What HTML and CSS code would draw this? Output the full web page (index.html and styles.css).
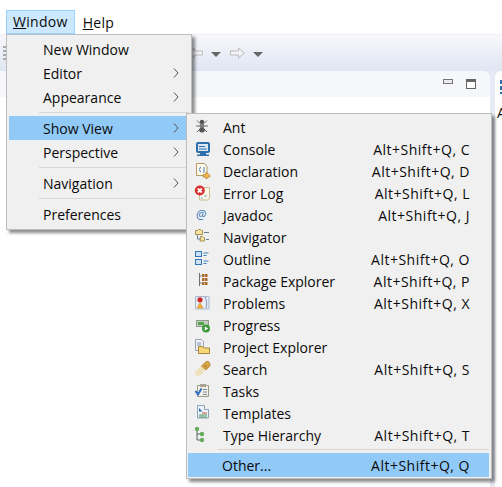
FILE: index.html
```html
<!DOCTYPE html>
<html lang="en">
<head>
    <meta charset="UTF-8">
    <title>Window menu - Show View</title>
    <link rel="stylesheet" href="styles.css">
</head>
<body>
    <div class="menubar">
        <span class="menubar-item active"><u>W</u>indow</span>
        <span class="menubar-item"><u>H</u>elp</span>
    </div>

    <div class="toolbar">
        <div class="grip"></div>
        <svg class="nav-arrow" viewBox="0 0 15 12"><path d="M.7 6l5.800-5v3h8v4h-8v3z"/></svg>
        <i class="drop"></i>
        <svg class="nav-arrow" viewBox="0 0 15 12"><path d="M14.300 6l-5.800-5v3h-8v4h8v3z"/></svg>
        <i class="drop"></i>
    </div>

    <div class="workspace">
        <div class="panel">
            <div class="panel-head">
                <i class="btn-min"></i>
                <i class="btn-max"></i>
            </div>
        </div>
        <div class="side-panel">
            <div class="side-icon"></div>
            <div class="side-text">A</div>
        </div>
    </div>

    <!-- Window menu -->
    <div class="menu window-menu">
        <div class="row">New Window</div>
        <div class="row">Editor<svg class="chev" viewBox="0 0 6 10"><path d="M1 .5l4 4.500-4 4.500"/></svg></div>
        <div class="row">Appearance<svg class="chev" viewBox="0 0 6 10"><path d="M1 .5l4 4.500-4 4.500"/></svg></div>
        <div class="sep"></div>
        <div class="row hot">Show View<svg class="chev" viewBox="0 0 6 10"><path d="M1 .5l4 4.500-4 4.500"/></svg></div>
        <div class="row">Perspective<svg class="chev" viewBox="0 0 6 10"><path d="M1 .5l4 4.500-4 4.500"/></svg></div>
        <div class="sep"></div>
        <div class="row">Navigation<svg class="chev" viewBox="0 0 6 10"><path d="M1 .5l4 4.500-4 4.500"/></svg></div>
        <div class="sep"></div>
        <div class="row">Preferences</div>
    </div>

    <!-- Show View submenu -->
    <div class="menu view-menu">
        <div class="view-row">
            <svg class="icon" viewBox="0 0 16 16">
                <path d="M2 1.500l3 3M12 1.500l-3 3M1 7h12M2 13l3-3M12 13l-3-3" stroke="#666" fill="none"/>
                <circle cx="7" cy="3" r="2.200" fill="#4f4f4f"/>
                <circle cx="7" cy="7" r="2.400" fill="#7b7b7b"/>
                <ellipse cx="7" cy="11" rx="2.800" ry="2.500" fill="#555"/>
            </svg>
            <span class="label">Ant</span>
        </div>
        <div class="view-row">
            <svg class="icon" viewBox="0 0 16 16">
                <rect x="2" y="2" width="12" height="9" rx="1" fill="#dfe9f5" stroke="#2f6fae" stroke-width="2"/>
                <path d="M4 5.500h6M4 8h8" stroke="#2f6fae"/>
                <path d="M5 12h6v1.500h3v1.500h-12v-1.500h3z" fill="#2f6fae"/>
            </svg>
            <span class="label">Console</span><span class="keys">Alt+Shift+Q, C</span>
        </div>
        <div class="view-row">
            <svg class="icon" viewBox="0 0 16 16">
                <path d="M1.500 .5h8l2.500 3v9h-10.500z" fill="#fbf8ec" stroke="#b59a62"/>
                <path d="M6 4c-1.500 0-.5 2-2 2.500 1.500.5.5 2.500 2 2.500M8 5h2M8 7h2M8 9h2" stroke="#4a7fb5" fill="none"/>
                <path d="M8 11.500h3v-2.500l4.500 4-4.500 3v-2h-3z" fill="#f2b74c" stroke="#b07f2a" stroke-width=".7"/>
            </svg>
            <span class="label">Declaration</span><span class="keys">Alt+Shift+Q, D</span>
        </div>
        <div class="view-row">
            <svg class="icon" viewBox="0 0 16 16">
                <path d="M5 2.500h9.500v11l-2 1.500h-8v-5z" fill="#fbf7e6" stroke="#c9bd93"/>
                <path d="M6 13h2M9 11h3" stroke="#7a9cc0"/>
                <circle cx="4.800" cy="5.500" r="5" fill="#d8302f"/>
                <path d="M2.800 3.500l4 4M6.800 3.500l-4 4" stroke="#fff" stroke-width="1.800"/>
            </svg>
            <span class="label">Error Log</span><span class="keys">Alt+Shift+Q, L</span>
        </div>
        <div class="view-row">
            <svg class="icon" viewBox="0 0 16 16">
                <text x="6" y="11.500" class="at">@</text>
            </svg>
            <span class="label">Javadoc</span><span class="keys">Alt+Shift+Q, J</span>
        </div>
        <div class="view-row">
            <svg class="icon" viewBox="0 0 16 16">
                <path d="M.5 1.500h2l1-1h2l1 1h1v4h-7z" fill="#f6e3a6" stroke="#a98f4e"/>
                <path d="M5.500 7.500h2l1 1h1v3.500h-4.500z" fill="#f6e3a6" stroke="#a98f4e"/>
                <path d="M2.500 6v4h3M9 3.500h5M11 10.500h3" stroke="#667f9a" fill="none"/>
            </svg>
            <span class="label">Navigator</span>
        </div>
        <div class="view-row">
            <svg class="icon" viewBox="0 0 16 16">
                <rect x=".5" y=".5" width="6" height="5" fill="#cfe2f5" stroke="#2f76b8"/>
                <rect x=".5" y="8.500" width="6" height="5" fill="#cfe2f5" stroke="#2f76b8"/>
                <path d="M8.500 2h5M8.500 4.500h3M8.500 10h5M8.500 12.500h3" stroke="#3f80bb"/>
            </svg>
            <span class="label">Outline</span><span class="keys">Alt+Shift+Q, O</span>
        </div>
        <div class="view-row">
            <svg class="icon" viewBox="0 0 16 16">
                <path d="M4.500 0v13M4.500 3h2M4.500 10h2" stroke="#6f6f6f" fill="none"/>
                <path d="M7 1h2.500v3h-2.500zM10 1h2.500v3h-2.500zM7 5h2.500v3h-2.500zM10 5h2.500v3h-2.500zM7 9h2.500v3h-2.500zM10 9h2.500v3h-2.500z" fill="#a96a2a"/>
            </svg>
            <span class="label">Package Explorer</span><span class="keys">Alt+Shift+Q, P</span>
        </div>
        <div class="view-row">
            <svg class="icon" viewBox="0 0 16 16">
                <path d="M.5 1.500h13.500v12.500h-13.500z" fill="#e7edf6" stroke="#a9b8cd"/>
                <path d="M10 2c2 3 2 8 1 11" stroke="#7d96b8" fill="none"/>
                <circle cx="5" cy="4.800" r="2.600" fill="#cf2a27"/>
                <path d="M5 8l3 5h-6z" fill="#f2b233" stroke="#c98a1e" stroke-width=".6"/>
            </svg>
            <span class="label">Problems</span><span class="keys">Alt+Shift+Q, X</span>
        </div>
        <div class="view-row">
            <svg class="icon" viewBox="0 0 16 16">
                <rect x="1.500" y="3.500" width="12" height="6" fill="#c5cfc2" stroke="#8d9a8c"/>
                <rect x="3" y="5" width="6" height="3" fill="#55a24a"/>
                <circle cx="11" cy="11.500" r="4" fill="#3f9a3c"/>
                <path d="M9.800 9.500l3.400 2-3.400 2z" fill="#fff"/>
            </svg>
            <span class="label">Progress</span>
        </div>
        <div class="view-row">
            <svg class="icon" viewBox="0 0 16 16">
                <path d="M.5 .5h6l2 2v9h-8z" fill="#f2f2f4" stroke="#9aa3b3"/>
                <path d="M2 4h4M2 6h4" stroke="#7d93b4"/>
                <path d="M3.500 7.500h4l1.500 1.500h5.500v5.500h-11z" fill="#f6d677" stroke="#a9873a"/>
            </svg>
            <span class="label">Project Explorer</span>
        </div>
        <div class="view-row">
            <svg class="icon" viewBox="0 0 16 16">
                <path d="M.3 11l6.700-7 4.500 4-6.500 6.500c-3 1.500-6-1-4.700-3.500z" fill="#efe2bb"/>
                <path d="M6.500 5l4.500-4.500h2.500l1.500 2v2.500l-4 4z" fill="#dca544" stroke="#a97c2c" stroke-width=".7"/>
                <path d="M9.500 4l2.500 2.500" stroke="#7d6128"/>
            </svg>
            <span class="label">Search</span><span class="keys">Alt+Shift+Q, S</span>
        </div>
        <div class="view-row">
            <svg class="icon" viewBox="0 0 16 16">
                <path d="M2.500 2.500h11v11h-11z" fill="#f3f1e6" stroke="#9d9a8a"/>
                <path d="M5 1h6v3h-6z" fill="#a8a490"/>
                <path d="M8 6.500h4M8 9h4M8 11.500h4" stroke="#7a8798"/>
                <path d="M.5 8l2.500 3.500 3.500-6" stroke="#2a6fc2" stroke-width="2" fill="none"/>
            </svg>
            <span class="label">Tasks</span>
        </div>
        <div class="view-row">
            <svg class="icon" viewBox="0 0 16 16">
                <path d="M2.500 .5h7v4h4v8.500h-11z" fill="#eef3fa" stroke="#8fa3bd"/>
                <path d="M4 3l3.500 3.500h-3.500z" fill="#2d6cab"/>
                <path d="M7 8h5" stroke="#c9503c"/>
                <path d="M4 10h8M4 12h8" stroke="#3f9150"/>
            </svg>
            <span class="label">Templates</span>
        </div>
        <div class="view-row">
            <svg class="icon" viewBox="0 0 16 16">
                <path d="M2 2v11h5M2 7h5" stroke="#54695a" fill="none"/>
                <circle cx="2" cy="2" r="2.200" fill="#67ab5e"/>
                <circle cx="7" cy="7" r="2.200" fill="#67ab5e"/>
                <circle cx="7" cy="13" r="2.200" fill="#67ab5e"/>
            </svg>
            <span class="label">Type Hierarchy</span><span class="keys">Alt+Shift+Q, T</span>
        </div>
        <div class="sep view-sep"></div>
        <div class="view-row other">
            <span class="label">Other...</span><span class="keys">Alt+Shift+Q, Q</span>
        </div>
    </div>
</body>
</html>
```

FILE: styles.css
```css
html, body {
    margin: 0;
    height: 487px;
    overflow: hidden;
}
body {
    position: relative;
    background: #fff;
    font-family: "Open Sans", "Noto Sans", sans-serif;
    font-size: 14px;
    color: #0a0a0a;
}

/* menu bar */
.menubar {
    display: flex;
    height: 24px;
    padding: 10px 0 0 6px;
    letter-spacing: 0.3px;
}
.menubar-item {
    padding: 0 7px;
    line-height: 24px;
    border: 1px solid transparent;
    box-sizing: border-box;
    height: 24px;
}
.menubar-item.active {
    padding: 0 6px;
    background: #cce8ff;
    border-color: #99d1ff;
    line-height: 22px;
}

/* toolbar */
.toolbar {
    display: flex;
    align-items: center;
    height: 37px;
    box-sizing: border-box;
    background: linear-gradient(#f8f8fb, #dfe5f3);
    border-top: 1px solid #f0f0f0;
    padding-left: 3px;
}
.grip {
    width: 3px;
    height: 15px;
    margin-right: 182px;
    background: repeating-linear-gradient(#a8a8a8 0 2px, transparent 2px 4px);
}
.nav-arrow {
    width: 15px;
    height: 12px;
    fill: #f3f3f3;
    stroke: #bbb;
}
.drop {
    width: 0;
    height: 0;
    margin: 2px 9px 0 8px;
    border-left: 5px solid transparent;
    border-right: 5px solid transparent;
    border-top: 5px solid #666;
}

/* background views */
.workspace {
    display: flex;
    gap: 5px;
    height: 416px;
    background: #e6eaf5;
}
.panel {
    flex: 1;
    background: #fff;
    border-top-right-radius: 8px;
    overflow: hidden;
}
.panel-head {
    display: flex;
    justify-content: flex-end;
    align-items: center;
    gap: 13px;
    height: 26px;
    padding-right: 14px;
    background: #f5f7fb;
}
.btn-min {
    width: 8px;
    height: 3px;
    border: 1px solid #777;
    background: #eee;
    margin-bottom: 5px;
}
.btn-max {
    width: 8px;
    height: 6px;
    border: 1px solid #666;
    border-top-width: 3px;
    background: #fff;
}
.side-panel {
    width: 7px;
    background: #fff;
    border-top-left-radius: 6px;
    padding: 9px 0 0 5px;
    box-sizing: border-box;
}
.side-icon {
    width: 2px;
    height: 14px;
    background: repeating-linear-gradient(#2f6fae 0 4px, #fff 4px 6px);
}
.side-text {
    margin: 10px 0 0 -3px;
    line-height: 18px;
}

/* popup menus */
.menu {
    position: absolute;
    box-sizing: border-box;
    background: #f0f0f0;
    border: 1px solid #bdbdbd;
    box-shadow: 3px 3px 3px rgba(0, 0, 0, 0.45);
}
.window-menu {
    left: 6px;
    top: 34px;
    width: 186px;
    height: 196px;
    padding: 2px 2px;
}
.row {
    position: relative;
    height: 24px;
    line-height: 26px;
    padding-left: 34px;
}
.row.hot {
    background: #91c9f7;
}
.chev {
    position: absolute;
    right: 10px;
    top: 7px;
    width: 6px;
    height: 10px;
    fill: none;
    stroke: #555;
}
.sep {
    height: 1px;
    margin: 3px 0 3px 30px;
    background: #d7d7d7;
}
.view-menu {
    left: 186px;
    top: 113px;
    width: 306px;
    height: 366px;
    padding: 2px 2px 1px 1px;
}
.view-row {
    display: flex;
    align-items: center;
    height: 22px;
    padding-left: 7px;
}
.icon {
    width: 16px;
    height: 16px;
    flex: none;
    overflow: visible;
}
.label {
    margin-left: 12px;
}
.keys {
    margin-left: auto;
    padding-right: 19px;
    letter-spacing: 0.5px;
}
.view-sep {
    margin: 3px 0 3px 30px;
}
.view-row.other {
    height: 24px;
    background: #91c9f7;
    padding-left: 22px;
}
.at {
    font-size: 12px;
    font-style: italic;
    text-anchor: middle;
    fill: #3a7ab8;
}
```
